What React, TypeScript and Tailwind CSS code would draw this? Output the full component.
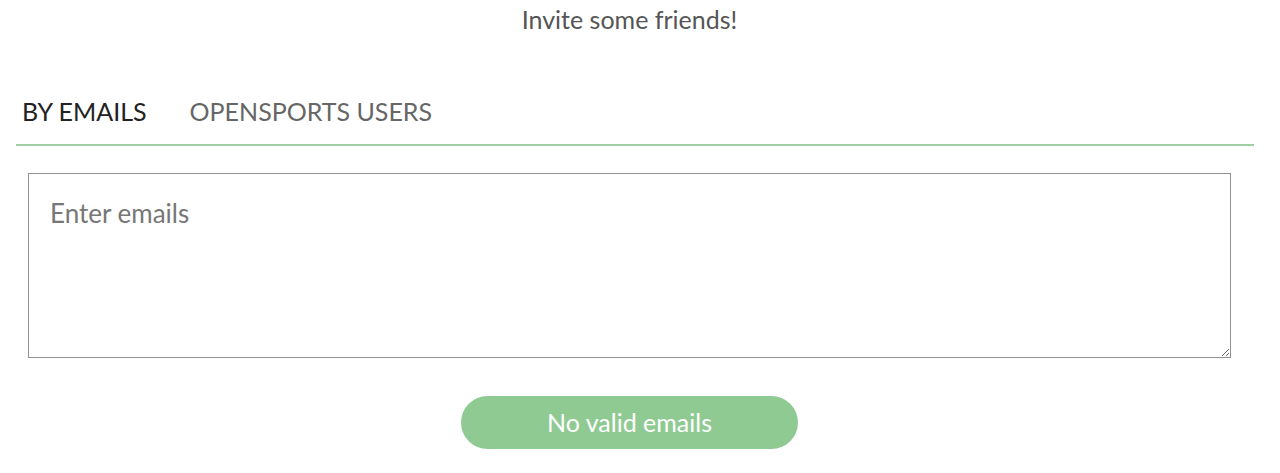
import React from "react";

export default function App() {
  return (
    <div className="w-[1280px] h-[473px] bg-white" style={{ fontFamily: "Lato, 'Noto Sans', sans-serif" }}>
      <div className="pl-[28px] w-[1231px] pt-[5px]">
        <div className="text-center text-[25px] leading-[28px] text-[#555]">Invite some friends!</div>
      </div>
      <div className="pl-[16px] w-[1254px] mt-[60px]">
        <div className="flex items-center gap-[43px] pl-[6px] h-[36px] text-[25px] leading-[36px]">
          <span className="text-[#222]">BY EMAILS</span>
          <span className="text-[#666]">OPENSPORTS USERS</span>
        </div>
        <div className="mt-[15px] h-[2px] bg-[#9fcfa2]" />
      </div>
      <div className="pl-[28px] w-[1231px] mt-[27px]">
        <textarea
          placeholder="Enter emails"
          className="block w-full h-[185px] border-[1.5px] border-[#939393] px-[21px] py-[24px] text-[26px] leading-[30px] text-[#444] placeholder:text-[#777] outline-none"
          style={{ fontFamily: "Lato, 'Noto Sans', sans-serif" }}
        />
        <div className="flex justify-center mt-[38px]">
          <button className="w-[337px] h-[53px] rounded-full bg-[#8fca93] text-white text-[25px] leading-[51px]">No valid emails</button>
        </div>
      </div>
    </div>
  );
}
